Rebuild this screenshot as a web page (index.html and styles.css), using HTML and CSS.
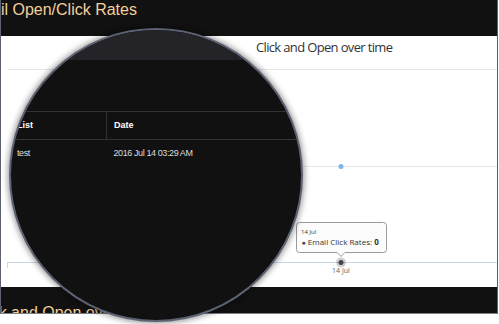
FILE: index.html
```html
<!DOCTYPE html>
<html lang="en">
<head>
  <meta charset="UTF-8">
  <title>Email Open/Click Rates</title>
  <link rel="stylesheet" href="styles.css">
</head>
<body>
  <div id="stage">
    <div class="shot">
      <div class="bar bar-top">
        <h1 class="bar-title">Email Open/Click Rates</h1>
      </div>
      <div class="panel">
        <svg class="chart" width="496" height="251" viewBox="1 36 496 251">
          <text class="chart-title" x="324.5" y="52" text-anchor="middle" textLength="137" lengthAdjust="spacing">Click and Open over time</text>
          <line class="grid" x1="8" y1="69.5" x2="497" y2="69.5"/>
          <line class="grid" x1="8" y1="166.5" x2="497" y2="166.5"/>
          <line class="axis" x1="7" y1="262.5" x2="497" y2="262.5"/>
          <line class="axis" x1="7.5" y1="262" x2="7.5" y2="268"/>
          <circle class="point-open" cx="341" cy="166.5" r="2.5"/>
          <circle class="point-halo" cx="341" cy="262.5" r="5"/>
          <circle class="point-click" cx="341" cy="262.5" r="2.5"/>
          <text class="axis-label" x="341" y="273" text-anchor="middle">14 Jul</text>
          <!-- tooltip -->
          <path class="tip" d="M299.5 222.5 H383.5 Q386.5 222.5 386.5 225.5 V249.5 Q386.5 252.5 383.5 252.5 H345 L341 256.5 L337 252.5 H299.5 Q296.5 252.5 296.5 249.5 V225.5 Q296.5 222.5 299.5 222.5 Z"/>
          <text class="tip-date" x="301" y="234">14 Jul</text>
          <text class="tip-line" x="301.5" y="244.5"><tspan class="tip-dot">●</tspan> Email Click Rates: <tspan class="tip-val">0</tspan></text>
        </svg>
      </div>
      <div class="bar bar-bottom">
        <h2 class="bar-title bar-title-low">Click and Open over time</h2>
      </div>
    </div>

    <!-- magnifier over the report table -->
    <div class="lens">
      <div class="lens-band"></div>
      <table class="lens-table">
        <thead>
          <tr>
            <th class="col-list">List</th>
            <th class="col-date">Date</th>
          </tr>
        </thead>
        <tbody>
          <tr>
            <td class="col-list">test</td>
            <td class="col-date">2016 Jul 14 03:29 AM</td>
          </tr>
        </tbody>
      </table>
    </div>
  </div>
</body>
</html>
```

FILE: styles.css
```css
body {
  margin: 0;
  padding: 0;
  background-color: #fff;
  font-family: "Liberation Sans", Arial, sans-serif;
  overflow: hidden;
}
#stage {
  position: relative;
  width: 499px;
  height: 324px;
}
.shot {
  width: 496px;
  border-left: 1px solid #5b6170;
  border-right: 1px solid #5b6170;
  border-bottom: 1px solid #7a7f88;
}
.bar {
  background-color: #111;
  overflow: hidden;
}
.bar-top {
  height: 36px;
}
.bar-bottom {
  height: 26px;
}
.bar-title {
  margin: 0;
  padding-top: 1px;
  font-size: 16px;
  font-weight: normal;
  color: #f3cf9c;
  white-space: nowrap;
  text-indent: -33px;
}
.bar-title-low {
  padding-top: 17px;
  text-indent: -29px;
}
.panel {
  height: 251px;
  background-color: #fff;
}
.chart {
  display: block;
}
.chart-title {
  font-family: "Open Sans", sans-serif;
  font-size: 13px;
  fill: #333;
}
.grid {
  stroke: #e6e6e6;
  stroke-width: 1;
}
.axis {
  stroke: #ccd6eb;
  stroke-width: 1;
}
.point-open {
  fill: #7cb5ec;
}
.point-halo {
  fill: #434348;
  fill-opacity: 0.25;
}
.point-click {
  fill: #434348;
}
.axis-label {
  font-family: "Open Sans", sans-serif;
  font-size: 7px;
  fill: #666;
}
.tip {
  fill: #fcfcfc;
  stroke: #9a9a9a;
  stroke-width: 1;
}
.tip-date {
  font-family: "Open Sans", sans-serif;
  font-size: 6px;
  fill: #333;
}
.tip-line {
  font-family: "Open Sans", sans-serif;
  font-size: 8px;
  fill: #333;
}
.tip-dot {
  fill: #434348;
  font-size: 7px;
}
.tip-val {
  font-weight: bold;
}

/* magnifier */
.lens {
  position: absolute;
  left: 9px;
  top: 28px;
  width: 294px;
  height: 294px;
  box-sizing: border-box;
  border: 2px solid #5c6271;
  border-radius: 50%;
  background-color: #111;
  overflow: hidden;
  box-shadow: 0 0 6px 1px rgba(0, 0, 0, 0.45);
}
.lens-band {
  height: 30px;
  background-color: #232328;
}
.lens-table {
  margin-top: 51px;
  width: 300px;
  border-collapse: collapse;
  color: #fff;
  font-size: 9px;
  line-height: 11px;
  text-align: left;
}
.lens-table th,
.lens-table td {
  padding: 8px 6px 8px 6px;
}
.lens-table th {
  font-weight: bold;
  border-top: 1px solid #333;
  border-bottom: 1px solid #333;
}
.lens-table th.col-list {
  width: 83px;
  border-right: 1px solid #333;
}
.lens-table .col-date {
  padding-left: 7px;
}
.lens-table td {
  color: #ddd;
  letter-spacing: -0.4px;
}
```
